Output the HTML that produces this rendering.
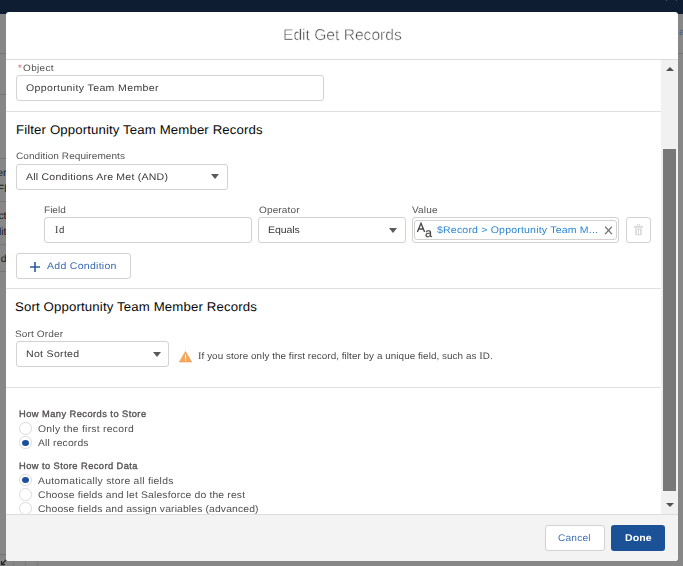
<!DOCTYPE html>
<html><head><meta charset="utf-8">
<style>
*{box-sizing:border-box;margin:0;padding:0}
html,body{width:683px;height:566px;overflow:hidden;background:#878787;font-family:"Liberation Sans",sans-serif;position:relative}
.a{position:absolute}
.t{position:absolute;white-space:nowrap;will-change:transform;text-rendering:geometricPrecision}
svg.a{display:block}
</style></head><body>
<div class="a" style="left:0px;top:0px;width:683px;height:14px;background:#0f1d33"></div>
<div class="a" style="left:0px;top:53px;width:6px;height:1px;background:#767676"></div>
<div class="a" style="left:0px;top:94px;width:6px;height:1px;background:#767676"></div>
<div class="a" style="left:0px;top:158px;width:6px;height:1px;background:#767676"></div>
<div class="a" style="left:0px;top:201px;width:6px;height:1px;background:#767676"></div>
<div class="a" style="left:0px;top:244px;width:6px;height:1px;background:#767676"></div>
<div class="a" style="left:0px;top:271px;width:6px;height:1px;background:#767676"></div>
<div class="a" style="left:0px;top:554px;width:6px;height:1px;background:#767676"></div>
<div class="a" style="left:666px;top:0px;width:1px;height:1px;background:#4a5566"></div>
<div class="a" style="left:676px;top:0px;width:1px;height:1px;background:#4a5566"></div>
<div class="a" style="left:678px;top:53px;width:5px;height:1px;background:#767676"></div>
<div class="a" style="left:13px;top:561px;width:1px;height:5px;background:#7a7a7a"></div>
<div class="a" style="left:25px;top:561px;width:1px;height:5px;background:#7a7a7a"></div>
<div class="a" style="left:37px;top:561px;width:1px;height:5px;background:#7a7a7a"></div>
<div class="a" style="left:0;top:0;width:6px;height:566px;overflow:hidden"><div class="t" style="right:-0.5px;left:auto;top:169.46px;font-size:10.4px;line-height:10.4px;color:#1a1a1a;will-change:auto">er</div><div class="t" style="right:-0.5px;left:auto;top:185.16px;font-size:10.4px;line-height:10.4px;color:#1a1a1a;will-change:auto">Fl</div><div class="t" style="right:-0.5px;left:auto;top:212.36px;font-size:10.4px;line-height:10.4px;color:#1a1a1a;will-change:auto">ct</div><div class="t" style="right:-0.5px;left:auto;top:228.16px;font-size:10.4px;line-height:10.4px;color:#1a1a1a;will-change:auto">lit</div><div class="t" style="right:-0.5px;left:auto;top:255.06px;font-size:10.4px;line-height:10.4px;color:#1a1a1a;will-change:auto">d</div></div>
<div class="t" style="left:679px;top:28px;font-size:10px;line-height:10px;color:#3a5d8a;will-change:auto">a</div>
<svg class="a" style="left:0;top:558px" width="8" height="8" viewBox="0 0 8 8"><path d="M6 2L1.5 6.5M1.5 3V6.5H5" fill="none" stroke="#2a2a2a" stroke-width="1.3"/></svg>
<div class="a" style="left:6px;top:12px;width:672px;height:549px;background:#fff;border-radius:3px"></div>
<div class="a" style="left:6px;top:59px;width:672px;height:1px;background:#dcdcdc"></div>
<div class="t" style="left:282.60px;top:27.84px;font-size:15.6px;line-height:15.6px;letter-spacing:0.000px;font-weight:normal;color:#3e3c3a;-webkit-text-stroke:0.45px #fff">Edit Get Records</div>
<div class="a" style="left:661px;top:60px;width:17px;height:454px;background:#f1f1f1"></div>
<div class="a" style="left:663px;top:149px;width:13px;height:342px;background:#787878"></div>
<div class="a" style="left:665.5px;top:66.5px;width:0;height:0;border-left:4px solid transparent;border-right:4px solid transparent;border-bottom:4.8px solid #505050"></div>
<div class="a" style="left:665.5px;top:502.7px;width:0;height:0;border-left:4px solid transparent;border-right:4px solid transparent;border-top:4.8px solid #505050"></div>
<div class="a" style="left:6px;top:514px;width:672px;height:1px;background:#dcdcdc"></div>
<div class="a" style="left:6px;top:515px;width:672px;height:46px;background:#f3f3f3;border-radius:0 0 3px 3px"></div>
<div class="a" style="left:6px;top:111px;width:655px;height:1px;background:#e0e0e0"></div>
<div class="a" style="left:6px;top:288px;width:655px;height:1px;background:#e0e0e0"></div>
<div class="a" style="left:6px;top:387px;width:655px;height:1px;background:#e0e0e0"></div>
<div class="t" style="left:23.00px;top:64.13px;font-size:9.3px;line-height:9.3px;letter-spacing:0.300px;font-weight:normal;color:#565452;transform:scaleX(1.08);transform-origin:0 0;">Object</div>
<div class="t" style="left:17.5px;top:64px;font-size:9.5px;line-height:9.5px;color:#d2625e">*</div>
<div class="a" style="left:16px;top:75px;width:308px;height:26px;border:1px solid #d4d2d0;border-radius:3px;background:#fff;"></div>
<div class="t" style="left:26.40px;top:83.78px;font-size:9.6px;line-height:9.6px;letter-spacing:0.322px;font-weight:normal;color:#3c3a38;transform:scaleX(1.1);transform-origin:0 0;">Opportunity Team Member</div>
<div class="t" style="left:15.50px;top:123.54px;font-size:12.6px;line-height:12.6px;letter-spacing:0.112px;font-weight:normal;color:#080707;transform:scaleX(1.05);transform-origin:0 0;will-change:auto">Filter Opportunity Team Member Records</div>
<div class="t" style="left:16.00px;top:151.93px;font-size:9.3px;line-height:9.3px;letter-spacing:0.056px;font-weight:normal;color:#565452;transform:scaleX(1.08);transform-origin:0 0;">Condition Requirements</div>
<div class="a" style="left:16px;top:164px;width:212px;height:26px;border:1px solid #d4d2d0;border-radius:3px;background:#fff;"></div>
<div class="t" style="left:25.80px;top:172.58px;font-size:9.6px;line-height:9.6px;letter-spacing:0.198px;font-weight:normal;color:#3c3a38;transform:scaleX(1.1);transform-origin:0 0;">All Conditions Are Met (AND)</div>
<div class="a" style="left:211px;top:174px;width:0;height:0;border-left:4.0px solid transparent;border-right:4.0px solid transparent;border-top:5px solid #5c5a58"></div>
<div class="t" style="left:43.80px;top:206.03px;font-size:9.3px;line-height:9.3px;letter-spacing:-0.005px;font-weight:normal;color:#565452;transform:scaleX(1.08);transform-origin:0 0;">Field</div>
<div class="a" style="left:44px;top:217px;width:208px;height:26px;border:1px solid #d4d2d0;border-radius:3px;background:#fff;"></div>
<div class="t" style="left:54.70px;top:225.98px;font-size:9.6px;line-height:9.6px;letter-spacing:0.600px;font-weight:normal;color:#3c3a38;"><span style="font-family:'Liberation Serif',serif;font-size:10.2px">I</span>d</div>
<div class="t" style="left:258.70px;top:206.13px;font-size:9.3px;line-height:9.3px;letter-spacing:0.122px;font-weight:normal;color:#565452;transform:scaleX(1.08);transform-origin:0 0;">Operator</div>
<div class="a" style="left:258px;top:217px;width:148px;height:26px;border:1px solid #d4d2d0;border-radius:3px;background:#fff;"></div>
<div class="t" style="left:268.40px;top:225.98px;font-size:9.6px;line-height:9.6px;letter-spacing:-0.073px;font-weight:normal;color:#3c3a38;transform:scaleX(1.1);transform-origin:0 0;">Equals</div>
<div class="a" style="left:389px;top:228px;width:0;height:0;border-left:4.0px solid transparent;border-right:4.0px solid transparent;border-top:5px solid #5c5a58"></div>
<div class="t" style="left:411.60px;top:205.93px;font-size:9.3px;line-height:9.3px;letter-spacing:0.125px;font-weight:normal;color:#565452;transform:scaleX(1.08);transform-origin:0 0;">Value</div>
<div class="a" style="left:412px;top:217px;width:207px;height:26px;border:1px solid #d4d2d0;border-radius:3px;background:#fff;"></div>
<div class="a" style="left:414px;top:220px;width:203px;height:20px;border:1px solid #d4d2d0;border-radius:3px;background:#fff"></div>
<svg class="a" style="left:412px;top:218px" width="24" height="22" viewBox="412 218 24 22"><path d="M417.4 231.9L421 223.2L424.6 231.9M418.6 229H423.4" fill="none" stroke="#4a4846" stroke-width="1.35" stroke-linejoin="miter"/></svg>
<div class="t" style="left:424.8px;top:226.84px;font-size:12.6px;line-height:12.6px;color:#4a4846;-webkit-text-stroke:0.2px #4a4846">a</div>
<div class="t" style="left:436.90px;top:226.38px;font-size:9.6px;line-height:9.6px;letter-spacing:0.164px;font-weight:normal;color:#2a86d6;transform:scaleX(1.1);transform-origin:0 0;">$Record &gt; Opportunity Team M...</div>
<svg class="a" style="left:604px;top:225.5px" width="9" height="9" viewBox="0 0 9 9"><path d="M1.1 0.6L7.9 8.1M7.9 0.6L1.1 8.1" stroke="#727070" stroke-width="1.35"/></svg>
<div class="a" style="left:626px;top:217px;width:25px;height:26px;border:1px solid #d4d2d0;border-radius:3px;background:#fff;"></div>
<svg class="a" style="left:634px;top:224px" width="9" height="12" viewBox="0 0 9 12"><path d="M3.4 1.9V0.5H5.6V1.9" fill="none" stroke="#d9d9d9" stroke-width="0.9"/><rect x="0" y="1.8" width="9" height="2" fill="#d9d9d9"/><rect x="1.3" y="4.5" width="6.4" height="6.8" fill="#d9d9d9"/><rect x="3" y="5.6" width="1" height="4.6" fill="#fff"/><rect x="5" y="5.6" width="1" height="4.6" fill="#fff"/></svg>
<div class="a" style="left:16px;top:253px;width:115px;height:26px;border:1px solid #d4d2d0;border-radius:3px;background:#fff;"></div>
<svg class="a" style="left:30px;top:261.5px" width="10" height="10" viewBox="0 0 10 10"><path d="M5 0V10M0 5H10" stroke="#2b5aa0" stroke-width="1.6"/></svg>
<div class="t" style="left:46.80px;top:262.28px;font-size:9.6px;line-height:9.6px;letter-spacing:0.239px;font-weight:normal;color:#3a6bb0;transform:scaleX(1.1);transform-origin:0 0;">Add Condition</div>
<div class="t" style="left:14.70px;top:300.64px;font-size:12.6px;line-height:12.6px;letter-spacing:0.128px;font-weight:normal;color:#080707;transform:scaleX(1.05);transform-origin:0 0;will-change:auto">Sort Opportunity Team Member Records</div>
<div class="t" style="left:14.90px;top:330.13px;font-size:9.3px;line-height:9.3px;letter-spacing:0.117px;font-weight:normal;color:#565452;transform:scaleX(1.08);transform-origin:0 0;">Sort Order</div>
<div class="a" style="left:16px;top:341px;width:153px;height:26px;border:1px solid #d4d2d0;border-radius:3px;background:#fff;"></div>
<div class="t" style="left:25.60px;top:349.68px;font-size:9.6px;line-height:9.6px;letter-spacing:0.274px;font-weight:normal;color:#3c3a38;transform:scaleX(1.1);transform-origin:0 0;">Not Sorted</div>
<div class="a" style="left:153px;top:352px;width:0;height:0;border-left:4.0px solid transparent;border-right:4.0px solid transparent;border-top:5px solid #5c5a58"></div>
<svg class="a" style="left:179px;top:350.5px" width="13" height="12" viewBox="0 0 13 12"><path d="M6.5 0.6L12.6 10.9H0.4Z" fill="#f4a55a" stroke="#f4a55a" stroke-width="0.8" stroke-linejoin="round"/><rect x="5.95" y="3.6" width="1.1" height="4.2" fill="#fff"/><rect x="5.95" y="8.6" width="1.1" height="1.2" fill="#fff"/></svg>
<div class="t" style="left:197.60px;top:352.13px;font-size:9.3px;line-height:9.3px;letter-spacing:0.060px;font-weight:normal;color:#4a4846;transform:scaleX(1.06);transform-origin:0 0;"><span style="font-family:'Liberation Serif',serif;font-size:9.8px">I</span>f you store only the first record, filter by a unique field, such as <span style="font-family:'Liberation Serif',serif;font-size:9.8px">I</span>D.</div>
<div class="t" style="left:18.80px;top:410.43px;font-size:9.3px;line-height:9.3px;letter-spacing:0.450px;font-weight:normal;color:#565452;-webkit-text-stroke:0.35px #565452">How Many Records to Store</div>
<div class="a" style="left:19.15px;top:422.25px;width:12.5px;height:12.5px;border:1px solid #dddbda;border-radius:50%;background:#fff"></div>
<div class="t" style="left:38.40px;top:424.88px;font-size:9.6px;line-height:9.6px;letter-spacing:0.252px;font-weight:normal;color:#514f4d;transform:scaleX(1.08);transform-origin:0 0;">Only the first record</div>
<div class="a" style="left:19.15px;top:436.25px;width:12.5px;height:12.5px;border:1px solid #dddbda;border-radius:50%;background:#fff"></div>
<div class="a" style="left:21.60px;top:439.60px;width:7.4px;height:6.3px;border-radius:50%;background:#1c4f9c"></div>
<div class="t" style="left:38.40px;top:438.68px;font-size:9.6px;line-height:9.6px;letter-spacing:0.147px;font-weight:normal;color:#514f4d;transform:scaleX(1.08);transform-origin:0 0;">All records</div>
<div class="t" style="left:18.80px;top:462.03px;font-size:9.3px;line-height:9.3px;letter-spacing:0.435px;font-weight:normal;color:#565452;-webkit-text-stroke:0.35px #565452">How to Store Record Data</div>
<div class="a" style="left:19.15px;top:473.85px;width:12.5px;height:12.5px;border:1px solid #dddbda;border-radius:50%;background:#fff"></div>
<div class="a" style="left:21.60px;top:477.20px;width:7.4px;height:6.3px;border-radius:50%;background:#1c4f9c"></div>
<div class="t" style="left:38.40px;top:476.68px;font-size:9.6px;line-height:9.6px;letter-spacing:0.241px;font-weight:normal;color:#514f4d;transform:scaleX(1.08);transform-origin:0 0;">Automatically store all fields</div>
<div class="a" style="left:19.15px;top:488.15px;width:12.5px;height:12.5px;border:1px solid #dddbda;border-radius:50%;background:#fff"></div>
<div class="t" style="left:38.40px;top:490.78px;font-size:9.6px;line-height:9.6px;letter-spacing:0.142px;font-weight:normal;color:#514f4d;transform:scaleX(1.08);transform-origin:0 0;">Choose fields and let Salesforce do the rest</div>
<div class="a" style="left:6px;top:500px;width:655px;height:14px;overflow:hidden"><div class="a" style="left:13.149999999999999px;top:2.0500000000000114px;width:12.5px;height:12.5px;border:1px solid #dddbda;border-radius:50%;background:#fff"></div>
<div class="t" style="left:32.40px;top:4.78px;font-size:9.6px;line-height:9.6px;letter-spacing:0.119px;font-weight:normal;color:#514f4d;transform:scaleX(1.08);transform-origin:0 0;">Choose fields and assign variables (advanced)</div>
</div>
<div class="a" style="left:545px;top:525px;width:60px;height:26px;border:1px solid #d4d2d0;border-radius:3px;background:#fff"></div>
<div class="t" style="left:558.30px;top:533.88px;font-size:9.6px;line-height:9.6px;letter-spacing:0.159px;font-weight:normal;color:#3f72b5;transform:scaleX(1.06);transform-origin:0 0;">Cancel</div>
<div class="a" style="left:611px;top:525px;width:54px;height:26px;background:#1b5196;border-radius:3px"></div>
<div class="t" style="left:624.90px;top:533.71px;font-size:9.8px;line-height:9.8px;letter-spacing:0.867px;font-weight:bold;color:#fff;transform:scaleX(1.08);transform-origin:0 0;letter-spacing:0.05px">Done</div>
</body></html>
